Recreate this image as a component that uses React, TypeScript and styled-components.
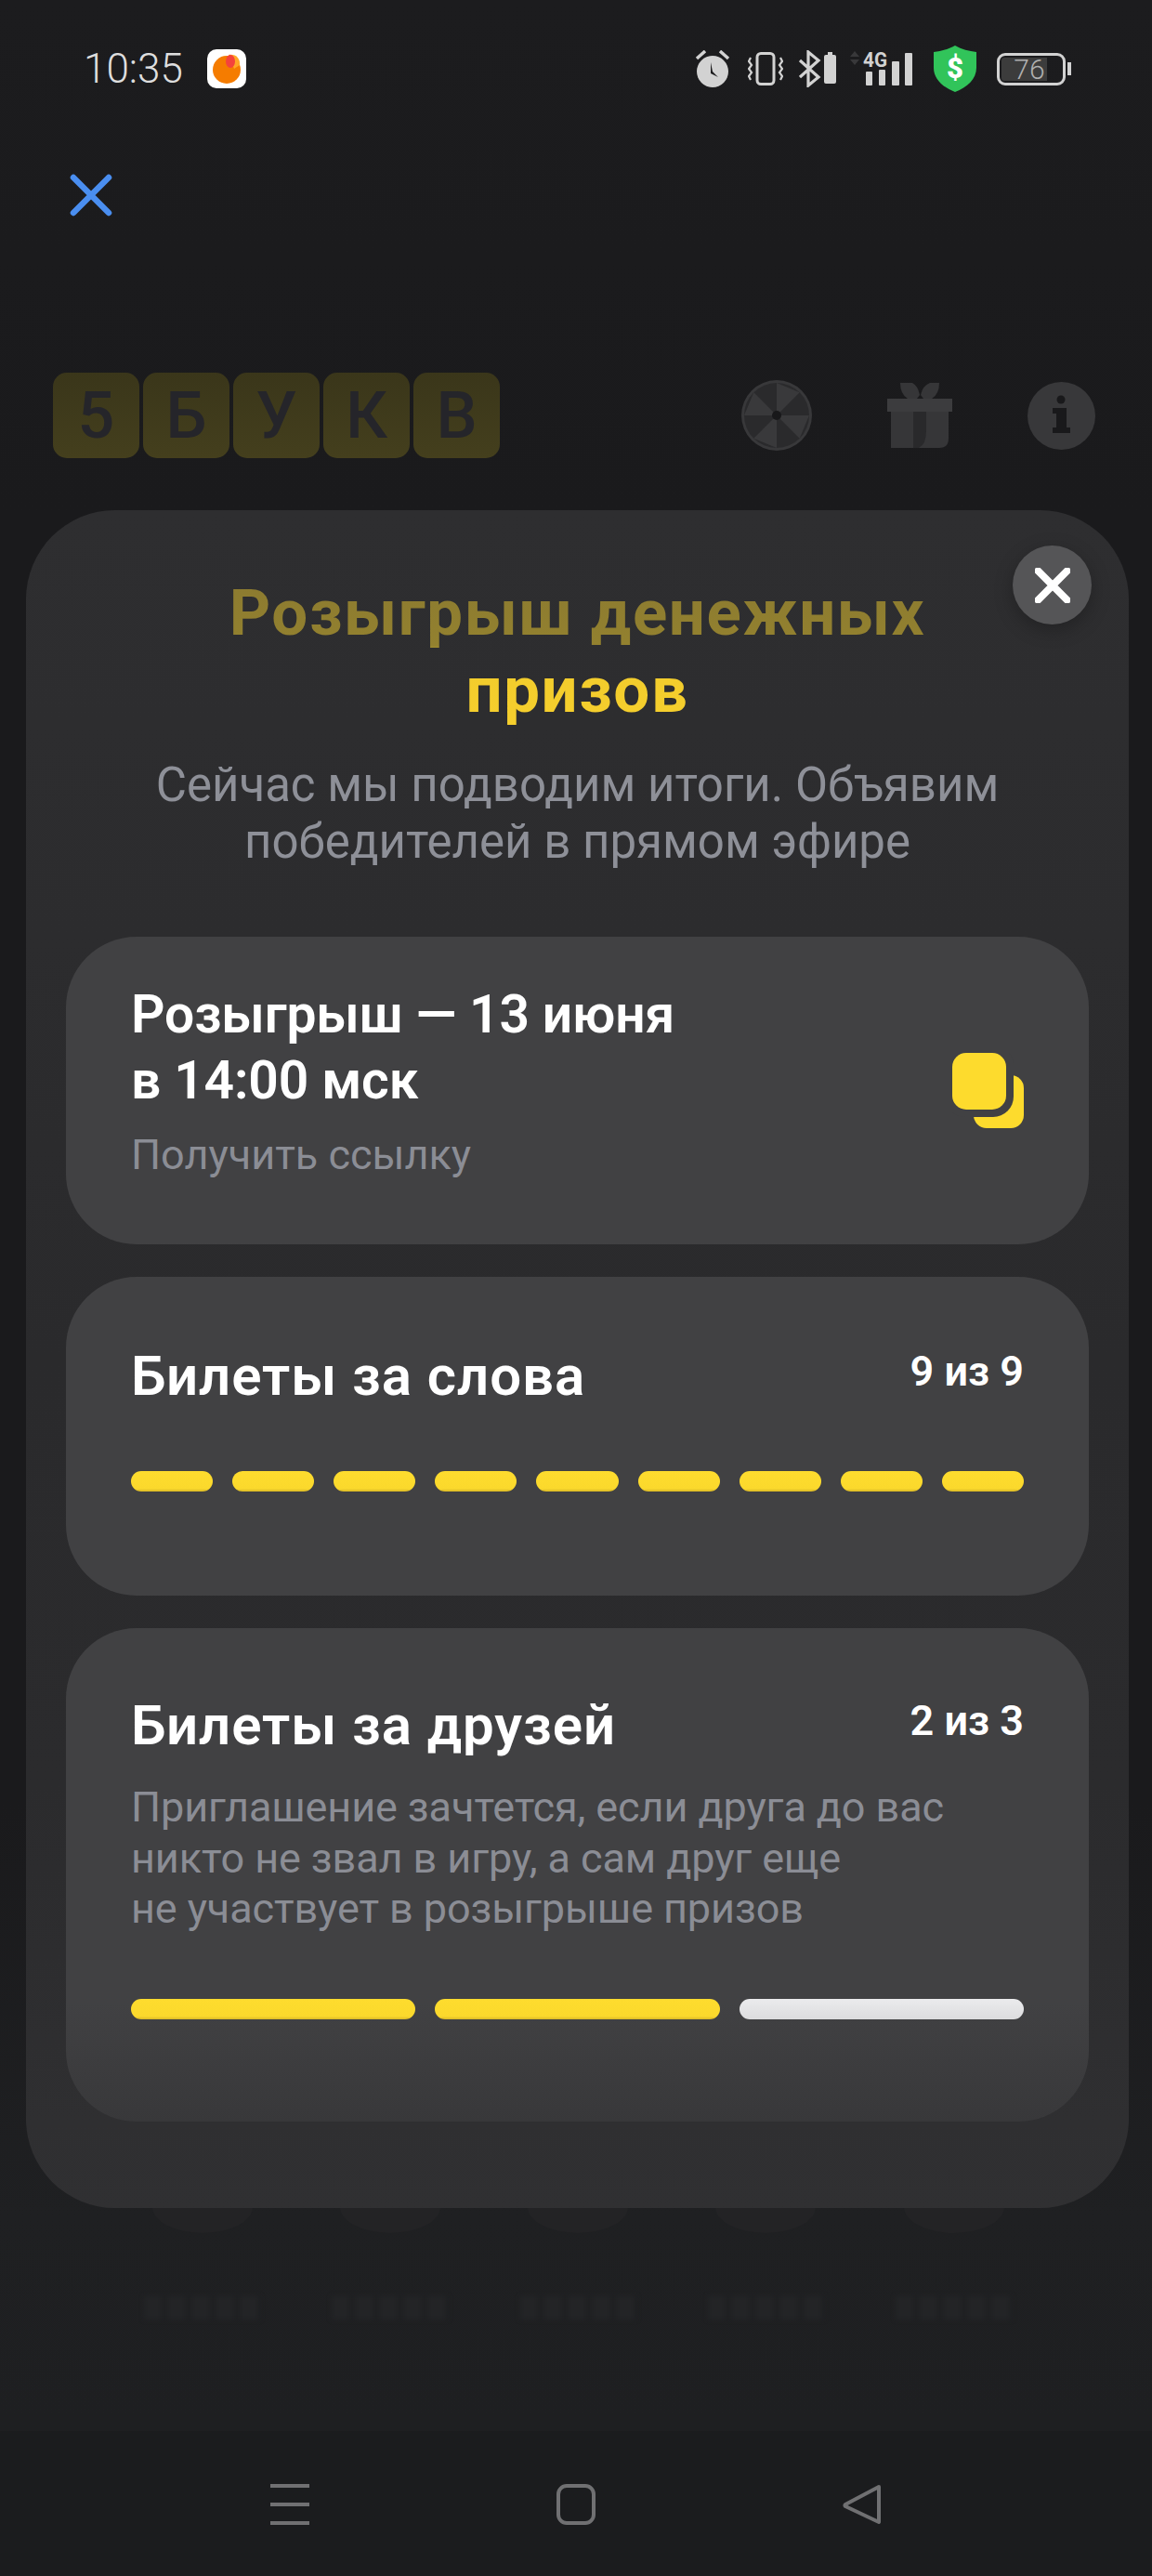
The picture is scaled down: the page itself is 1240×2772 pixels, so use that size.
import * as React from 'react';
import styled, { createGlobalStyle } from 'styled-components';

const GlobalStyle = createGlobalStyle`
	html, body {
		margin: 0;
		padding: 0;
		background: #1c1c1e;
	}
	* {
		box-sizing: border-box;
	}
`;

const Page = styled.div`
	position: relative;
	width: 1240px;
	height: 2772px;
	overflow: hidden;
	display: flex;
	flex-direction: column;
	background: linear-gradient(180deg, #1c1c1e 0%, #1a1a1c 20%, #1a1a1c 70%, #1f2022 86%, #1e1f21 94%);
	font-family: Roboto, "Noto Sans", sans-serif;
`;

const StatusBar = styled.div`
	height: 148px;
	padding: 49px 87px 0 90px;
	display: flex;
	justify-content: space-between;
	align-items: flex-start;
`;

const StatusLeft = styled.div`
	display: flex;
	align-items: center;
	gap: 26px;
	height: 50px;
`;

const Time = styled.span`
	font-size: 44px;
	font-weight: 300;
	color: #dedede;
	line-height: 50px;
`;

const AppBadge = styled.div`
	width: 42px;
	height: 42px;
	border-radius: 10px;
	background: #fff;
	display: flex;
	align-items: center;
	justify-content: center;
`;

const StatusIcons = styled.div`
	display: flex;
	align-items: center;
	height: 50px;
`;

const BatteryBody = styled.div`
	margin-left: 22px;
	width: 74px;
	height: 35px;
	border: 3px solid #d2d2d2;
	border-radius: 9px;
	padding: 2px;
`;

const BatteryFill = styled.div`
	height: 100%;
	background: #3c3c3c;
	border-radius: 3px 0 0 3px;
	color: #b0b0b0;
	font-size: 30px;
	font-weight: 300;
	line-height: 26px;
	text-align: right;
	padding-right: 2px;
`;

const BatteryNub = styled.div`
	width: 4px;
	height: 14px;
	margin-left: 2px;
	background: #d2d2d2;
`;

const SignalIcon = styled.svg`
	margin-top: -6px;
	margin-right: 21px;
`;

const BackRow = styled.div`
	padding: 39px 0 0 75px;
	height: 253px;
`;

const HeaderRow = styled.div`
	display: flex;
	align-items: center;
	justify-content: space-between;
	padding: 0 61px 0 57px;
	height: 92px;
`;

const Logo = styled.div`
	display: flex;
	gap: 4px;
`;

const LogoTile = styled.div`
	width: 93px;
	height: 92px;
	border-radius: 15px;
	background: linear-gradient(180deg, #3a361a 0%, #443f1d 100%);
	color: #25252a;
	font-size: 70px;
	font-weight: 500;
	line-height: 92px;
	text-align: center;
`;

const HeaderIcons = styled.div`
	display: flex;
	align-items: center;
	gap: 81px;
`;

const GhostGrid = styled.div`
	margin-top: 1882px;
	margin-left: 155px;
	width: 934px;
	display: grid;
	grid-template-columns: repeat(5, 125px);
	justify-content: space-between;
`;

const GhostCell = styled.div`
	display: flex;
	flex-direction: column;
	align-items: center;
	gap: 68px;
`;

const GhostCircle = styled.div`
	width: 108px;
	height: 28px;
	border-radius: 0 0 54px 54px / 0 0 28px 28px;
	background: #232325;
`;

const GhostText = styled.div`
	width: 125px;
	height: 25px;
	background: repeating-linear-gradient(90deg, #232426 0 18px, #1f2022 18px 26px);
	filter: blur(2.5px);
`;

const NavBar = styled.div`
	position: absolute;
	left: 0;
	right: 0;
	bottom: 0;
	height: 156px;
	background: #1b1c1e;
	display: grid;
	grid-template-columns: repeat(3, 42px);
	justify-content: center;
	column-gap: 266px;
	padding-top: 57px;
`;

const Modal = styled.section`
	position: absolute;
	left: 28px;
	top: 549px;
	width: 1187px;
	height: 1827px;
	border-radius: 96px;
	background: linear-gradient(180deg, #2e2e30 0%, #2a2a2c 50%, #2b2b2d 75%, #303032 100%);
	padding: 69px 43px 0;
`;

const CloseButton = styled.div`
	position: absolute;
	top: 38px;
	right: 40px;
	width: 85px;
	height: 85px;
	border-radius: 50%;
	background: #555557;
	box-shadow: 0 6px 20px rgba(0, 0, 0, 0.25);
	display: flex;
	align-items: center;
	justify-content: center;
`;

const Title = styled.h1`
	margin: 0;
	font-size: 69px;
	font-weight: 700;
	line-height: 83px;
	letter-spacing: 1.6px;
	text-align: center;
	background: linear-gradient(180deg, #8b7a30 0%, #93812f 46%, #f2cc2c 60%, #f6cf2d 100%);
	-webkit-background-clip: text;
	background-clip: text;
	color: transparent;
`;

const Subtitle = styled.p`
	margin: 30px 0 0;
	font-size: 51px;
	font-weight: 400;
	line-height: 61px;
	text-align: center;
	color: #8e9098;
`;

const Cards = styled.div`
	margin-top: 72px;
	display: flex;
	flex-direction: column;
	gap: 35px;
`;

const Card = styled.div<{ $fade?: boolean; $h: number; $top: number }>`
	height: ${p => p.$h}px;
	border-radius: 76px;
	padding: ${p => p.$top}px 70px 0;
	background: ${p => p.$fade
		? 'linear-gradient(180deg, #414143 0%, #414143 76%, #38383a 100%)'
		: '#414143'};
`;

const LinkCard = styled(Card)`
	display: flex;
	align-items: center;
	justify-content: space-between;
`;

const LinkText = styled.div`
	margin-bottom: 21px;
`;

const CardHead = styled.div`
	display: flex;
	justify-content: space-between;
	align-items: flex-start;
`;

const CardTitle = styled.h2<{ $large?: boolean }>`
	margin: 0;
	font-size: ${p => p.$large ? 60 : 57}px;
	font-weight: 600;
	line-height: 71px;
	letter-spacing: ${p => p.$large ? 0.95 : -0.15}px;
	color: #fff;
`;

const Count = styled.span`
	font-size: 45px;
	font-weight: 600;
	line-height: 62px;
	color: #fff;
`;

const LinkLabel = styled.div`
	margin-top: 18px;
	font-size: 45px;
	line-height: 54px;
	color: #8b8d95;
`;

const Description = styled.p`
	margin: 26px 0 0;
	font-size: 45px;
	letter-spacing: -0.1px;
	line-height: 54.5px;
	color: #8b8d95;
`;

const Progress = styled.div<{ $n: number; $mt: number }>`
	margin-top: ${p => p.$mt}px;
	display: grid;
	grid-template-columns: repeat(${p => p.$n}, 1fr);
	column-gap: 21px;
`;

const Segment = styled.div<{ $off?: boolean }>`
	height: 22px;
	border-radius: 11px;
	background: ${p => p.$off
		? 'linear-gradient(180deg, #ebebed 0%, #dcdcde 100%)'
		: 'linear-gradient(180deg, #fedc2e 0%, #fbd92c 85%, #d9b826 100%)'};
`;

const StatusGlyphs = () => (
	<>
		<svg width="38" height="40" viewBox="0 0 38 40" style={{ marginRight: 19 }}>
			<path d="M2 9 L11 1 M36 9 L27 1" stroke="#d2d2d2" strokeWidth="3.5" />
			<circle cx="19" cy="23" r="17" fill="#d2d2d2" />
			<path d="M17 13 L19 23 L25 29 L17 25 Z" fill="#1c1c1e" />
		</svg>
		<svg width="38" height="36" viewBox="0 0 38 36" style={{ marginRight: 17 }}>
			<rect x="10" y="1.5" width="18" height="33" rx="4" fill="none" stroke="#d2d2d2" strokeWidth="3" />
			<path d="M3 6 L1 10 L4 14 L1 18 L4 22 L1 26 L3 30 M35 6 L37 10 L34 14 L37 18 L34 22 L37 26 L35 30" fill="none" stroke="#d2d2d2" strokeWidth="2.2" />
		</svg>
		<svg width="41" height="40" viewBox="0 0 41 40" style={{ marginRight: 13 }}>
			<path d="M1 11 L21 29 L10 38 L10 2 L21 11 L1 29" fill="none" stroke="#d2d2d2" strokeWidth="3.2" />
			<rect x="27" y="5" width="13" height="31" rx="2" fill="#d2d2d2" />
			<rect x="31" y="2" width="5" height="3" fill="#d2d2d2" />
		</svg>
		<SignalIcon width="70" height="46" viewBox="0 -6 70 46">
			<path d="M1 7 L6 1 L11 7 Z M1 10 L6 16 L11 10 Z" fill="#38383a" />
			<text x="15" y="18" fontFamily="Roboto" fontWeight="700" fontSize="22" fill="#d2d2d2" textLength="26" lengthAdjust="spacingAndGlyphs">4G</text>
			<rect x="18" y="23" width="7" height="15" rx="1" fill="#d2d2d2" />
			<rect x="32" y="21" width="7" height="17" rx="1" fill="#d2d2d2" />
			<rect x="46" y="12" width="8" height="26" rx="1" fill="#d2d2d2" />
			<rect x="60" y="3" width="8" height="35" rx="1" fill="#d2d2d2" />
		</SignalIcon>
		<svg width="46" height="50" viewBox="0 0 46 50">
			<path d="M23 0 C30 4 38 6 46 7 L46 24 C46 36 36 45 23 50 C10 45 0 36 0 24 L0 7 C8 6 16 4 23 0 Z" fill="#31c45a" />
			<text x="23" y="35" textAnchor="middle" fontFamily="Roboto" fontWeight="900" fontSize="31" fill="#fff">$</text>
		</svg>
	</>
);

const Wheel = () => (
	<svg width="76" height="76" viewBox="0 0 76 76">
		<circle cx="38" cy="38" r="38" fill="#38383a" />
		<circle cx="38" cy="38" r="35" fill="#2a2a2c" />
		<path d="M38 38 L38 3 L62.7 13.3 Z M38 38 L73 38 L62.7 62.7 Z M38 38 L38 73 L13.3 62.7 Z M38 38 L3 38 L13.3 13.3 Z" fill="#39393b" />
		<circle cx="38" cy="38" r="5" fill="#18181a" />
	</svg>
);

const Gift = () => (
	<svg width="70" height="70" viewBox="0 0 70 70">
		<path d="M14 0 L27 0 Q33 3 35 13 L32 17 L22 17 Q14 12 14 0 Z" fill="#363638" />
		<path d="M56 0 L46 0 Q38 3 36 13 L39 17 L48 17 Q56 12 56 0 Z" fill="#363638" />
		<rect x="0" y="17" width="70" height="14" fill="#3c3c3e" />
		<path d="M4 31 L66 31 L66 60 Q66 70 56 70 L4 70 Z" fill="#363638" />
		<path d="M28 31 L42 31 L42 52 Q42 66 34 70 L28 70 Z" fill="#29292b" />
	</svg>
);

const Info = () => (
	<svg width="73" height="73" viewBox="0 0 73 73">
		<circle cx="36.5" cy="36.5" r="36.5" fill="#38383a" />
		<circle cx="36" cy="19" r="4.5" fill="#19191b" />
		<path d="M27 28 L42 28 L42 49 L46 49 L46 55 L27 55 L27 49 L31 49 L31 34 L27 34 Z" fill="#19191b" />
	</svg>
);

const Cross = ({ size, stroke, width }: { size: number; stroke: string; width: number }) => (
	<svg width={size} height={size} viewBox="0 0 46 46" style={{ display: 'block' }}>
		<path d="M4 4 L42 42 M42 4 L4 42" stroke={stroke} strokeWidth={width} strokeLinecap="round" />
	</svg>
);

const CopyIcon = () => (
	<svg width="77" height="81" viewBox="0 0 77 81">
		<rect x="23" y="24" width="54" height="57" rx="14" fill="#fddb2d" />
		<rect x="-8" y="-8" width="74" height="77" rx="22" fill="#414143" />
		<rect x="0" y="0" width="58" height="61" rx="15" fill="#fddb2d" />
	</svg>
);

const App = () => {
	return (
		<Page>
			<GlobalStyle />
			<StatusBar>
				<StatusLeft>
					<Time>10:35</Time>
					<AppBadge>
						<svg width="34" height="36" viewBox="0 0 34 36">
							<circle cx="17" cy="19" r="15" fill="#f57c00" />
							<path d="M19 3 C26 2 32 6 31 14 L25 18 Z" fill="#ffa726" />
							<ellipse cx="21" cy="10" rx="5" ry="7" fill="#f4433c" />
						</svg>
					</AppBadge>
				</StatusLeft>
				<StatusIcons>
					<StatusGlyphs />
					<BatteryBody>
						<BatteryFill style={{ width: '76%' }}>76</BatteryFill>
					</BatteryBody>
					<BatteryNub />
				</StatusIcons>
			</StatusBar>
			<BackRow>
				<Cross size={46} stroke="#4a8ef0" width={6.5} />
			</BackRow>
			<HeaderRow>
				<Logo>
					{['5', 'Б', 'У', 'К', 'В'].map(letter => (
						<LogoTile key={letter}>{letter}</LogoTile>
					))}
				</Logo>
				<HeaderIcons>
					<Wheel />
					<Gift />
					<Info />
				</HeaderIcons>
			</HeaderRow>
			<GhostGrid>
				{[0, 1, 2, 3, 4].map(i => (
					<GhostCell key={i}>
						<GhostCircle />
						<GhostText />
					</GhostCell>
				))}
			</GhostGrid>
			<NavBar>
				<svg width="42" height="44" viewBox="0 0 42 44">
					<path d="M0 2 H42 M0 22 H42 M0 42 H42" stroke="#707072" strokeWidth="4" />
				</svg>
				<svg width="42" height="44" viewBox="0 0 42 44">
					<rect x="2" y="2" width="38" height="40" rx="9" fill="none" stroke="#707072" strokeWidth="4" />
				</svg>
				<svg width="42" height="44" viewBox="0 0 42 44">
					<path d="M39 3 L3 22 Q2 23 3 24 L39 41 Z" fill="none" stroke="#707072" strokeWidth="4" strokeLinejoin="round" />
				</svg>
			</NavBar>
			<Modal>
				<CloseButton>
					<Cross size={38} stroke="#fff" width={9.5} />
				</CloseButton>
				<Title>Розыгрыш денежных<br />призов</Title>
				<Subtitle>Сейчас мы подводим итоги. Объявим<br />победителей в прямом эфире</Subtitle>
				<Cards>
					<LinkCard $h={331} $top={0}>
						<LinkText>
							<CardTitle>Розыгрыш — 13 июня<br />в 14:00 мск</CardTitle>
							<LinkLabel>Получить ссылку</LinkLabel>
						</LinkText>
						<CopyIcon />
					</LinkCard>
					<Card $h={343} $top={71}>
						<CardHead>
							<CardTitle $large>Билеты за слова</CardTitle>
							<Count>9 из 9</Count>
						</CardHead>
						<Progress $n={9} $mt={67}>
							{Array.from({ length: 9 }).map((_, i) => <Segment key={i} />)}
						</Progress>
					</Card>
					<Card $h={531} $top={69} $fade>
						<CardHead>
							<CardTitle $large>Билеты за друзей</CardTitle>
							<Count>2 из 3</Count>
						</CardHead>
						<Description>Приглашение зачтется, если друга до вас<br />никто не звал в игру, а сам друг еще<br />не участвует в розыгрыше призов</Description>
						<Progress $n={3} $mt={69}>
							<Segment />
							<Segment />
							<Segment $off />
						</Progress>
					</Card>
				</Cards>
			</Modal>
		</Page>
	);
};

export default App;
